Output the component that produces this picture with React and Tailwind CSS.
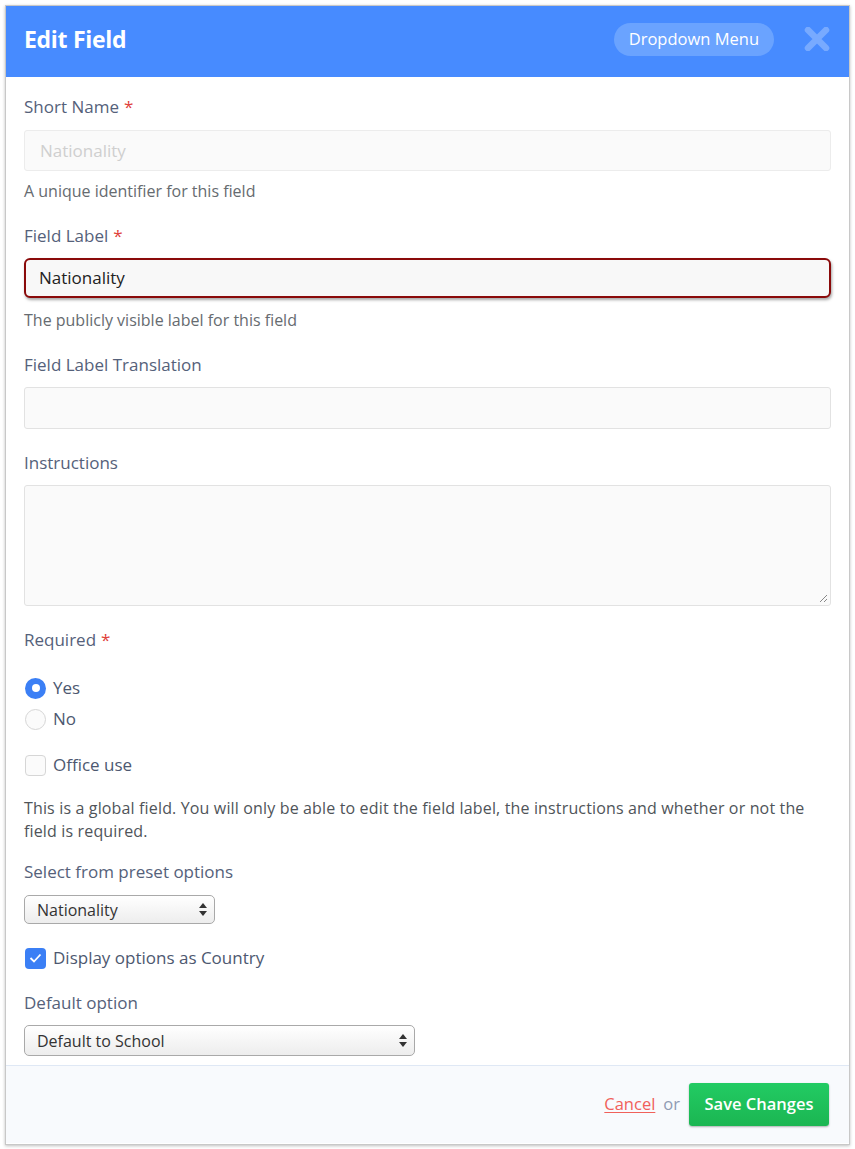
import React from "react";

const Label = ({ children, req, className = "" }) => (
  <div className={`text-[17px] leading-[24px] text-[#55617a] ${className}`}>
    {children}
    {req && <span className="text-[#e0413a] ml-[5px]">*</span>}
  </div>
);

const Help = ({ children, className = "" }) => (
  <div className={`text-[16px] leading-[24px] text-[#666b70] ${className}`}>{children}</div>
);

const Arrows = () => (
  <svg width="8" height="13" viewBox="0 0 8 13" className="shrink-0">
    <path d="M4 0 L8 5 H0 Z" fill="#333" />
    <path d="M4 13 L8 8 H0 Z" fill="#333" />
  </svg>
);

const Select = ({ text, w, h }) => (
  <div
    className={`${w} ${h} flex items-center justify-between pl-[12px] pr-[7px] rounded-[5px] border border-[#a9a9a9] bg-gradient-to-b from-[#ffffff] to-[#ededed] text-[16px] text-[#333]`}
  >
    <span>{text}</span>
    <Arrows />
  </div>
);

export default function App() {
  return (
    <div className="w-[855px] h-[1149px] bg-white p-[5px]" style={{ fontFamily: '"Open Sans", "Liberation Sans", sans-serif' }}>
      <div className="h-[1140px] border border-[#c8c8c8] shadow-[0_1px_3px_rgba(0,0,0,0.25)] flex flex-col bg-white">
        {/* Header */}
        <div className="h-[71px] bg-[#478bff] flex items-center pl-[18px] pr-[19px] pb-[5px]">
          <div className="text-white font-bold text-[23px] tracking-[-0.3px]">Edit Field</div>
          <div className="ml-auto h-[33px] px-[15px] rounded-full bg-[#6aa3ff] text-white text-[16.5px] flex items-center">
            Dropdown Menu
          </div>
          <svg width="26" height="24" viewBox="0 0 26 24" className="ml-[30px]">
            <path d="M4 3 L22 21 M22 3 L4 21" stroke="#78aaff" strokeWidth="6.5" strokeLinecap="round" />
          </svg>
        </div>

        {/* Body */}
        <div className="flex-1 px-[18px] pt-[18px]">
          <Label req>Short Name</Label>
          <div className="mt-[11px] h-[41px] rounded-[3px] border border-[#ececec] bg-[#fafafa] flex items-center pl-[15px] text-[17px] text-[#cfcfcf]">
            Nationality
          </div>
          <Help className="mt-[8px]">A unique identifier for this field</Help>

          <Label req className="mt-[21px]">Field Label</Label>
          <div className="mt-[10px] h-[40px] rounded-[6px] border-[2.5px] border-[#8a0a0a] bg-[#f8f8f8] shadow-[1px_2px_3px_rgba(0,0,0,0.35)] flex items-center pl-[13px] text-[17px] text-[#222]">
            Nationality
          </div>
          <Help className="mt-[10px]">The publicly visible label for this field</Help>

          <Label className="mt-[21px]">Field Label Translation</Label>
          <div className="mt-[10px] h-[42px] rounded-[3px] border border-[#e2e2e2] bg-[#fafafa]" />

          <Label className="mt-[22px]">Instructions</Label>
          <div className="mt-[10px] h-[121px] rounded-[3px] border border-[#e2e2e2] bg-[#fafafa] relative">
            <svg width="10" height="10" viewBox="0 0 10 10" className="absolute right-[2px] bottom-[2px]">
              <path d="M9 2 L2 9 M9 6 L6 9" stroke="#888" strokeWidth="1" />
            </svg>
          </div>

          <Label req className="mt-[22px]">Required</Label>
          <div className="mt-[24px] flex items-center h-[24px]">
            <div className="w-[21px] h-[21px] rounded-full bg-[#3b7ff5] flex items-center justify-center ml-[1px]">
              <div className="w-[8px] h-[8px] rounded-full bg-white" />
            </div>
            <span className="ml-[7px] text-[17px] text-[#4d5870]">Yes</span>
          </div>
          <div className="mt-[7px] flex items-center h-[24px]">
            <div className="w-[21px] h-[21px] rounded-full border border-[#d6d6d6] bg-[#fbfbfb] ml-[1px]" />
            <span className="ml-[7px] text-[17px] text-[#4d5870]">No</span>
          </div>

          <div className="mt-[22px] flex items-center h-[24px]">
            <div className="w-[21px] h-[21px] rounded-[4px] border border-[#d6d6d6] bg-[#fbfbfb] ml-[1px]" />
            <span className="ml-[7px] text-[17px] text-[#4d5870]">Office use</span>
          </div>

          <div className="mt-[20px] max-w-[790px] text-[16px] leading-[23px] text-[#4f5459] tracking-[0.15px]">
            This is a global field. You will only be able to edit the field label, the instructions and whether or not the
            field is required.
          </div>

          <Label className="mt-[17px]">Select from preset options</Label>
          <div className="mt-[11px]">
            <Select text="Nationality" w="w-[191px]" h="h-[29px]" />
          </div>

          <div className="mt-[22px] flex items-center h-[24px]">
            <div className="w-[21px] h-[21px] rounded-[4px] bg-[#3b7ff5] flex items-center justify-center ml-[1px]">
              <svg width="13" height="10" viewBox="0 0 13 10">
                <path d="M1.5 5 L5 8.5 L11.5 1.5" stroke="white" strokeWidth="1.8" fill="none" />
              </svg>
            </div>
            <span className="ml-[7px] text-[17px] text-[#4d5870]">Display options as Country</span>
          </div>

          <Label className="mt-[21px]">Default option</Label>
          <div className="mt-[10px]">
            <Select text="Default to School" w="w-[391px]" h="h-[31px]" />
          </div>
        </div>

        {/* Footer */}
        <div className="h-[78px] mb-[1px] border-t border-[#dfe8f5] bg-[#f8fafd] flex items-center justify-end pr-[20px]">
          <span className="text-[16.5px] text-[#f0605a] underline underline-offset-2">Cancel</span>
          <span className="ml-[8px] text-[16.5px] text-[#8f9bb3]">or</span>
          <div className="ml-[9px] h-[43px] w-[140px] rounded-[3px] bg-gradient-to-b from-[#22cb63] to-[#1bb652] shadow-[0_1px_2px_rgba(0,0,0,0.3)] text-white font-semibold text-[16.5px] flex items-center justify-center">
            Save Changes
          </div>
        </div>
      </div>
    </div>
  );
}
